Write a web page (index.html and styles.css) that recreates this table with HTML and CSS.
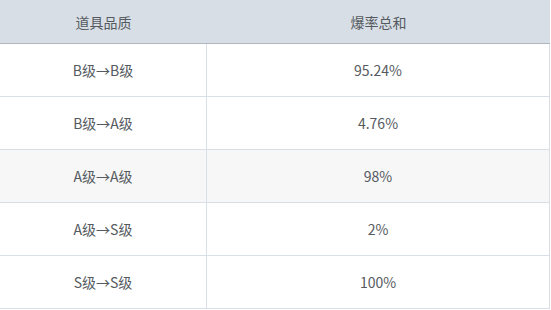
FILE: index.html
```html
<!DOCTYPE html>
<html lang="zh">
<head>
<meta charset="utf-8">
<link rel="stylesheet" href="styles.css">
</head>
<body>
<div class="table">
  <div class="row head">
    <div class="cell c1">道具品质</div>
    <div class="cell c2">爆率总和</div>
  </div>
  <div class="row">
    <div class="cell c1">B级→B级</div>
    <div class="cell c2">95.24%</div>
  </div>
  <div class="row">
    <div class="cell c1">B级→A级</div>
    <div class="cell c2">4.76%</div>
  </div>
  <div class="row alt">
    <div class="cell c1">A级→A级</div>
    <div class="cell c2">98%</div>
  </div>
  <div class="row">
    <div class="cell c1">A级→S级</div>
    <div class="cell c2">2%</div>
  </div>
  <div class="row">
    <div class="cell c1">S级→S级</div>
    <div class="cell c2">100%</div>
  </div>
</div>
</body>
</html>
```
FILE: styles.css
```css
html, body {
  margin: 0;
  padding: 0;
  background: #ffffff;
}
body {
  font-family: "Noto Sans CJK SC", "Noto Sans", sans-serif;
  font-size: 14px;
  color: #555a60;
}
.table {
  width: 550px;
  display: flex;
  flex-direction: column;
}
.row {
  display: grid;
  grid-template-columns: 207px 343px;
  height: 53px;
  border-bottom: 1px solid #d9dfe7;
  box-sizing: border-box;
}
.row.head {
  height: 44px;
  background: #d8dee5;
  border-bottom-color: #b1b7bf;
}
.row.alt {
  background: #f7f7f7;
}
.cell {
  display: flex;
  align-items: center;
  justify-content: center;
  box-sizing: border-box;
}
.c1 {
  border-right: 1px solid #d9dfe7;
}
.c2 {
  border-right: 1px solid #d9dfe7;
}
.head .c1, .head .c2 {
  border-right: none;
}
```
